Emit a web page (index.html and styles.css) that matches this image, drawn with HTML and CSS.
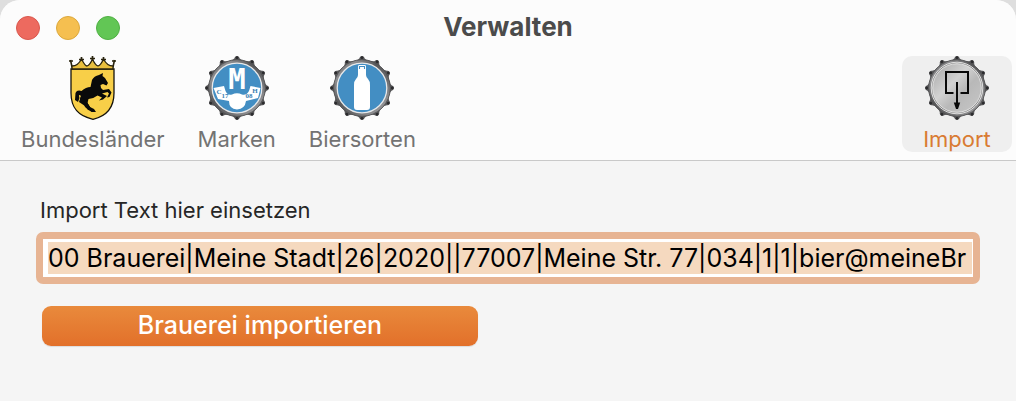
FILE: index.html
```
<!DOCTYPE html>
<html lang="de">
<head>
<meta charset="utf-8">
<title>Verwalten</title>
<link rel="stylesheet" href="styles.css">
</head>
<body>
<svg class="defs" aria-hidden="true">
  <defs>
    <linearGradient id="rim" x1="0" y1="0" x2="1" y2="1">
      <stop offset="0" stop-color="#4c4c4e"/><stop offset=".2" stop-color="#8e8e90"/><stop offset=".42" stop-color="#59595b"/><stop offset=".65" stop-color="#6a6a6c"/><stop offset=".85" stop-color="#949496"/><stop offset="1" stop-color="#505052"/>
    </linearGradient>
    <linearGradient id="metal" x1="0" y1="0" x2="1" y2="1">
      <stop offset="0" stop-color="#a6a6a6"/><stop offset=".4" stop-color="#d2d2d2"/><stop offset=".6" stop-color="#b8b8b8"/><stop offset="1" stop-color="#c8c8c8"/>
    </linearGradient>
    <g id="tooth"><path d="M-8-27Q-3-28-2-31Q0-33 2-31Q3-28 8-27Z" fill="#58585a"/><circle cy="-30.3" r="1.4" fill="#2b2b2d"/></g>
    <g id="cap">
      <use href="#tooth"/><use href="#tooth" transform="rotate(30)"/><use href="#tooth" transform="rotate(60)"/><use href="#tooth" transform="rotate(90)"/><use href="#tooth" transform="rotate(120)"/><use href="#tooth" transform="rotate(150)"/><use href="#tooth" transform="rotate(180)"/><use href="#tooth" transform="rotate(210)"/><use href="#tooth" transform="rotate(240)"/><use href="#tooth" transform="rotate(270)"/><use href="#tooth" transform="rotate(300)"/><use href="#tooth" transform="rotate(330)"/>
      <circle r="28.3" fill="url(#rim)" stroke="#4b4b4d" stroke-width=".8"/>
    </g>
  </defs>
</svg>
<div class="window">
  <header class="header">
    <div class="titlebar">
      <div class="lights">
        <button class="light close" aria-label="Schließen"></button>
        <button class="light minimize" aria-label="Minimieren"></button>
        <button class="light maximize" aria-label="Maximieren"></button>
      </div>
      <h1 class="title">Verwalten</h1>
    </div>
    <nav class="toolbar">
      <button class="tab">
        <svg class="icon" viewBox="0 0 64 64" aria-hidden="true">
          <path d="M10 13H53V37C53 52 46 60 32 63.300C17 60 10 52 10 37Z" fill="#f8cf48" stroke="#15130c" stroke-width="1.300"/>
          <path d="M9.500 4L11 11H52L53.500 4" fill="none" stroke="#2a240f" stroke-width="1.600"/>
          <path d="M11 10Q17 10 20.500 3Q24 10 26 10Q29 9 31.500 3Q34 9 37 10Q40 9 42.500 3Q46 10 52 10V13H11Z" fill="#e8bf3f" stroke="#2a240f" stroke-width="1.300"/>
          <path d="M18 3.500H23M29 2.500H34M40 3.500H45M20.500 1V5M31.500 0V5M42.500 1V5M8 5H12M51 5H55" stroke="#2a240f" stroke-width="1.700"/>
          <path d="M42 17L41.500 20L44 22L47 27L45.500 29.500L42 28L39.500 29L40 32L42 34L48 33L50.500 36.500L48.500 41L46 41.500L48 37.500L46.500 36L41 37.500L46 40L42 43.500L38 44.500L41 41.500L36.500 39.500Q32 43 27.500 43L26.500 47L29 51L33 53L35 56H30.500L24 51L22 46L19 43L20 40Q17 37 18.500 42L17 46L14 44L14.500 37Q16 33.500 20.500 35Q25 31 29.500 31L31 24Q33 20 38 19Z" fill="#090a0a"/>
          <path d="M20 40L18 46L24 50L27 54L32 55L29 51L26 46Z" fill="#090a0a"/>
        </svg>
        <span class="label">Bundesländer</span>
      </button>
      <button class="tab">
        <svg class="icon" viewBox="-32 -32 64 64" aria-hidden="true">
          <use href="#cap"/>
          <circle r="24.800" fill="#438ec3" stroke="#e7e9eb" stroke-width="1.300"/>
          <path d="M-23.500 0L-13-2L-11.500 3Q-9 8-5 6.500Q0 4 5 6.500Q9 8 12 3L13.500-2L23.500 0L21 10L9 13Q8 21 0 21.500Q-8 21-8 13L-19 11Z" fill="#fff"/>
          <text class="monogram" x="0" y="1" text-anchor="middle">M</text>
          <g class="cap-text" text-anchor="middle"><text x="-18" y="6">C</text><text x="-12" y="10">17</text><text x="12" y="10">08</text><text x="18" y="5">H</text></g>
        </svg>
        <span class="label">Marken</span>
      </button>
      <button class="tab">
        <svg class="icon" viewBox="-32 -32 64 64" aria-hidden="true">
          <use href="#cap"/>
          <circle r="24.800" fill="#438ec3" stroke="#e7e9eb" stroke-width="1.300"/>
          <path d="M-3-23H3Q4-23 4-21.500V-13Q4-11 6-9Q8-7 8-3V19Q8 22 5 22H-5Q-8 22-8 19V-3Q-8-7-6-9Q-4-11-4-13V-21.500Q-4-23-3-23Z" fill="#fff"/>
          <path d="M-2.500-19V-21.500H2.500V-19" fill="none" stroke="#438ec3" stroke-width="1.100"/>
        </svg>
        <span class="label">Biersorten</span>
      </button>
      <button class="tab active" aria-current="page">
        <svg class="icon" viewBox="-32 -32 64 64" aria-hidden="true">
          <use href="#cap"/>
          <circle r="25.800" fill="#8b8b8b" stroke="#e0e0e0" stroke-width="1"/>
          <circle r="24.300" fill="url(#metal)" stroke="#eee" stroke-width=".8"/>
          <path d="M-3.500 5H-11V-16H11V5H3.500" fill="none" stroke="#090909" stroke-width="2"/>
          <path d="M0-6V16" stroke="#090909" stroke-width="2"/><path d="M-3.200 14.500H3.200L1 21H-1Z" fill="#090909"/>
        </svg>
        <span class="label">Import</span>
      </button>
    </nav>
  </header>
  <main class="content">
    <label class="caption" for="import-text">Import Text hier einsetzen</label>
    <input class="field" id="import-text" type="text" value="00 Brauerei|Meine Stadt|26|2020||77007|Meine Str. 77|034|1|1|bier@meineBr">
    <button class="primary">Brauerei importieren</button>
  </main>
</div>
</body>
</html>
```
FILE: styles.css
```
* { box-sizing: border-box; }
body { margin: 0; background: #dedede; font-family: Inter, "Liberation Sans", sans-serif; }
button { border: 0; margin: 0; font: inherit; }
.defs { position: absolute; width: 0; height: 0; }
.window { min-height: 100vh; background: #f5f5f5; border-radius: 20px 20px 0 0; overflow: hidden; }
.header { background: #fcfcfc; border-bottom: 1px solid #c9c9c9; padding-bottom: 8px; }
.titlebar { display: grid; grid-template-columns: 1fr auto 1fr; align-items: center; height: 56px; padding: 0 16px; }
.lights { display: flex; gap: 16px; }
.light { width: 24px; height: 24px; padding: 0; border-radius: 50%; }
.close { background: #ed6a5f; border: 1px solid #d9584e; }
.minimize { background: #f5bf50; border: 1px solid #dba83d; }
.maximize { background: #62c655; border: 1px solid #50b044; }
.title { margin: 0; padding-bottom: 2px; font-size: 26px; line-height: 32px; font-weight: 700; color: #4b4b4b; }
.toolbar { display: flex; gap: 1px; padding: 0 4px 0 5px; }
.tab { display: flex; flex-direction: column; align-items: center; min-width: 110px; padding: 0 16px; background: none; border-radius: 10px; color: #737373; }
.tab.active { margin-left: auto; background: #efefef; color: #d97b32; }
.icon { width: 64px; height: 64px; }
.label { padding-top: 6px; font-size: 22px; line-height: 26px; }
.monogram { font: bold 29px "DejaVu Sans Mono", monospace; fill: #fff; }
.cap-text { font: bold 7px "Liberation Serif", serif; fill: #397fb3; }
.content { display: flex; flex-direction: column; align-items: flex-start; padding: 35px 36px; }
.caption { padding: 0 4px; font-size: 22px; line-height: 28px; color: #262626; }
.field { width: 100%; height: 52px; margin: 8px 0 22px; padding: 0 1px 0 5px; border: 7px solid #e7b493; border-radius: 7px; background: #f5d9bf; box-shadow: inset 5px 3px #fff, inset -1px -3px #fff; font: 25px/32px Inter, "Liberation Sans", sans-serif; color: #000; outline: 0; }
.primary { width: 436px; max-width: 100%; height: 40px; margin-left: 6px; padding: 0 0 2px; border-radius: 9px; background: linear-gradient(#e98a3c, #e2702a); box-shadow: 0 1px 1px #0000001a; color: #fff; font-size: 25px; line-height: 36px; font-weight: 500; }
```
